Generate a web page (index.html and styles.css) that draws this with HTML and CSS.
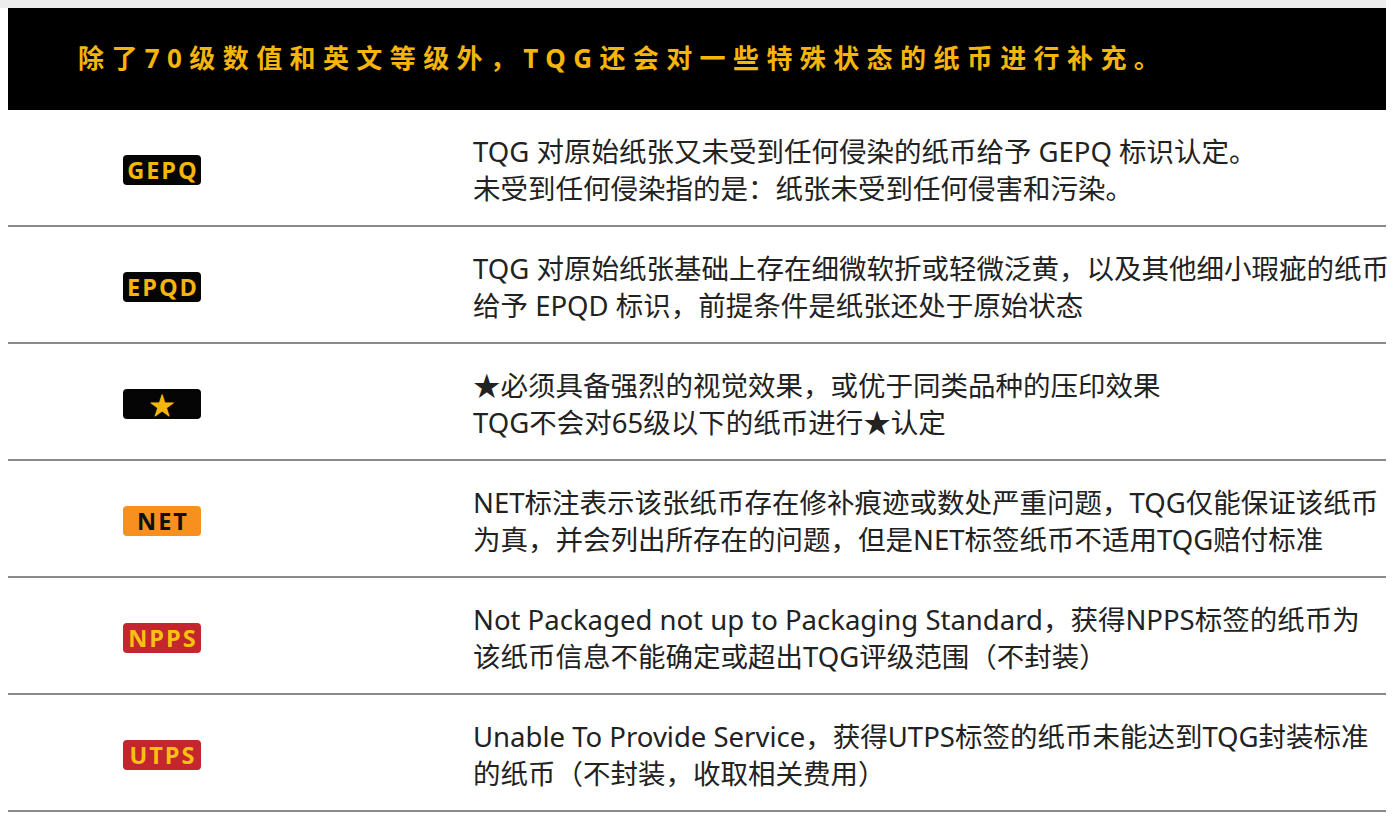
FILE: index.html
```html
<!DOCTYPE html>
<html lang="zh-CN">
<head>
<meta charset="utf-8">
<title>TQG 特殊标识</title>
<link rel="stylesheet" href="styles.css">
</head>
<body>
<div class="page">
  <div class="topstrip"></div>
  <div class="banner">除了70级数值和英文等级外，TQG还会对一些特殊状态的纸币进行补充。</div>
  <div class="row">
    <div class="badge-col"><span class="badge black">GEPQ</span></div>
    <div class="desc">TQG 对原始纸张又未受到任何侵染的纸币给予 GEPQ 标识认定。<br>未受到任何侵染指的是：纸张未受到任何侵害和污染。</div>
  </div>
  <div class="row">
    <div class="badge-col"><span class="badge black">EPQD</span></div>
    <div class="desc">TQG 对原始纸张基础上存在细微软折或轻微泛黄，以及其他细小瑕疵的纸币<br>给予 EPQD 标识，前提条件是纸张还处于原始状态</div>
  </div>
  <div class="row">
    <div class="badge-col"><span class="badge black star">★</span></div>
    <div class="desc">★必须具备强烈的视觉效果，或优于同类品种的压印效果<br>TQG不会对65级以下的纸币进行★认定</div>
  </div>
  <div class="row">
    <div class="badge-col"><span class="badge orange">NET</span></div>
    <div class="desc">NET标注表示该张纸币存在修补痕迹或数处严重问题，TQG仅能保证该纸币<br>为真，并会列出所存在的问题，但是NET标签纸币不适用TQG赔付标准</div>
  </div>
  <div class="row">
    <div class="badge-col"><span class="badge red">NPPS</span></div>
    <div class="desc">Not Packaged not up to Packaging Standard，获得NPPS标签的纸币为<br>该纸币信息不能确定或超出TQG评级范围（不封装）</div>
  </div>
  <div class="row">
    <div class="badge-col"><span class="badge red">UTPS</span></div>
    <div class="desc">Unable To Provide Service，获得UTPS标签的纸币未能达到TQG封装标准<br>的纸币（不封装，收取相关费用）</div>
  </div>
</div>
</body>
</html>
```

FILE: styles.css
```css
html, body {
  margin: 0;
  padding: 0;
  background: #ffffff;
}
body {
  font-family: "Noto Sans", "Noto Sans CJK SC", sans-serif;
  color: #222222;
}
.page {
  width: 1386px;
}
.topstrip {
  height: 8px;
  background: #ededed;
}
.banner {
  margin-left: 8px;
  height: 102px;
  background: #000000;
  color: #f5b50a;
  font-weight: 700;
  font-size: 26px;
  letter-spacing: 7.4px;
  display: flex;
  align-items: center;
  padding-left: 70px;
  padding-bottom: 4px;
  box-sizing: border-box;
}
.row {
  margin-left: 8px;
  height: 117px;
  border-bottom: 2px solid #8a8a8a;
  box-sizing: border-box;
  display: flex;
  align-items: center;
  padding-top: 4px;
}
.badge-col {
  flex: 0 0 465px;
  padding-left: 115px;
  box-sizing: border-box;
  display: flex;
}
.badge {
  width: 78px;
  height: 30px;
  border-radius: 4px;
  display: flex;
  align-items: center;
  justify-content: center;
  font-weight: 700;
  font-size: 23.5px;
  letter-spacing: 2px;
  padding-left: 2px;
  box-sizing: border-box;
  font-family: "Open Sans", "Noto Sans", sans-serif;
}
.black { background: #050505; color: #f5b50a; }
.orange { background: #f7901e; color: #111111; }
.red { background: #c3262c; color: #f9c10f; }
.star { font-size: 24px; letter-spacing: 0; padding-left: 0; }
.desc {
  font-size: 27.5px;
  line-height: 37px;
  white-space: nowrap;
}
```
